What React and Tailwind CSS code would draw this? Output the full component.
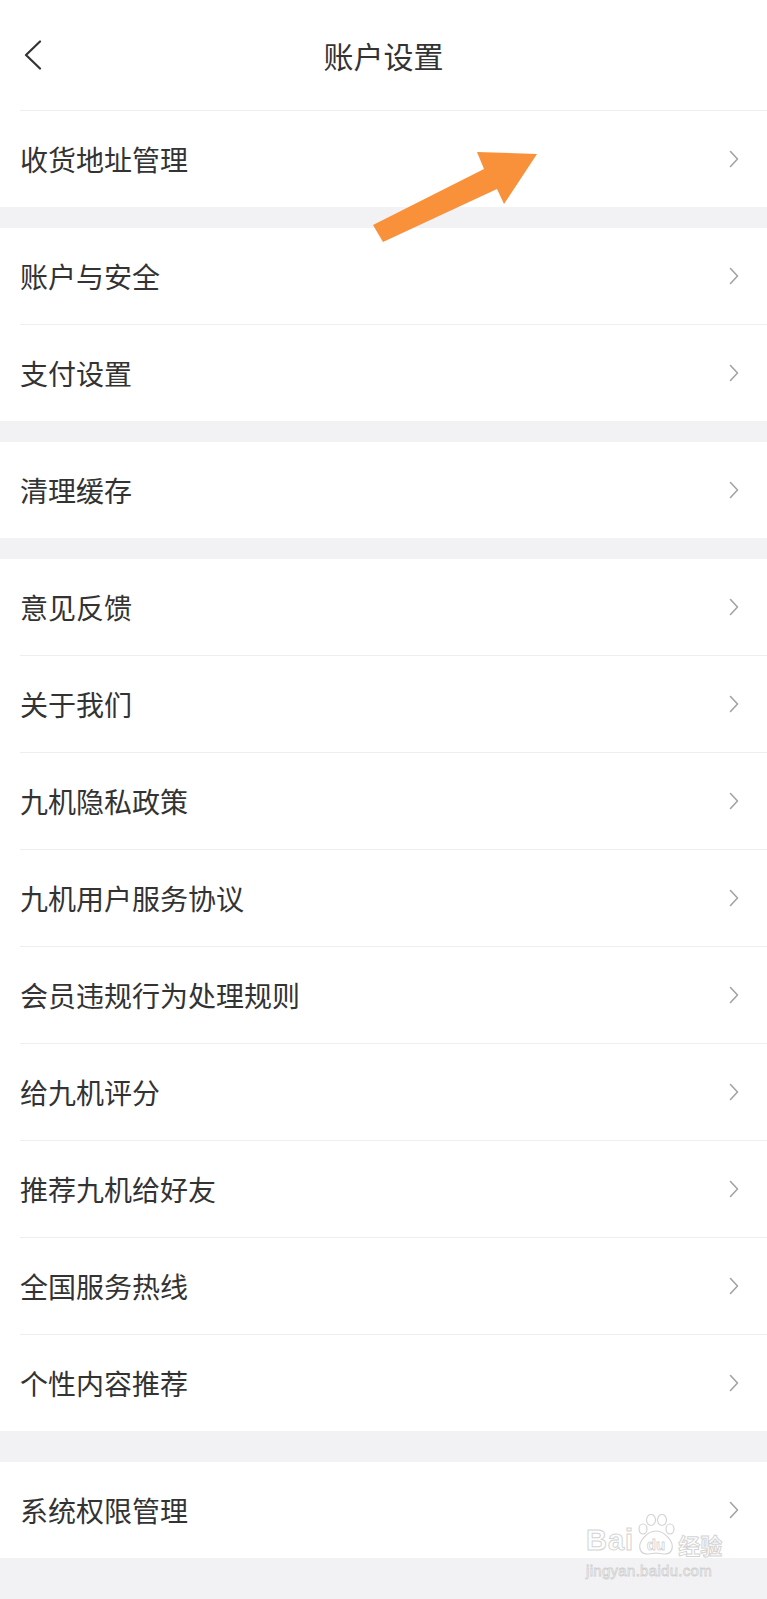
const SECTIONS = [
  { gap: 'mt-0', items: ['收货地址管理'] },
  { gap: 'mt-[21px]', items: ['账户与安全', '支付设置'] },
  { gap: 'mt-[21px]', items: ['清理缓存'] },
  {
    gap: 'mt-[21px]',
    items: [
      '意见反馈',
      '关于我们',
      '九机隐私政策',
      '九机用户服务协议',
      '会员违规行为处理规则',
      '给九机评分',
      '推荐九机给好友',
      '全国服务热线',
      '个性内容推荐',
    ],
  },
  { gap: 'mt-[31px]', items: ['系统权限管理'] },
];

const FONT = "font-['Noto_Sans_CJK_SC','Noto_Sans',sans-serif]";

function Chevron() {
  return (
    <svg width="10" height="18" viewBox="0 0 10 18" fill="none" className="shrink-0">
      <path d="M1.5 1.5 L8.5 9 L1.5 16.5" stroke="#a3a3a3" strokeWidth="1.6" strokeLinecap="round" strokeLinejoin="round" />
    </svg>
  );
}

function Row({ label, last }) {
  return (
    <div className="bg-white pl-5">
      <div
        className={`box-content flex h-[96px] items-center justify-between pr-[28px] ${last ? '' : 'border-b border-[#eeeeee]'}`}
      >
        <span className="text-[28px] leading-none text-[#333333]">{label}</span>
        <Chevron />
      </div>
    </div>
  );
}

function Watermark() {
  return (
    <div className="pointer-events-none absolute left-[586px] top-[1514px] flex flex-col items-start">
      <div className="flex items-end">
        <span className="font-['Liberation_Sans',sans-serif] text-[29px] font-bold leading-none tracking-[1px] text-white [-webkit-text-stroke:1px_#d4d4d4]">
          Bai
        </span>
        <svg width="44" height="42" viewBox="0 0 44 42" className="-mb-[1px]">
          <g fill="#ffffff" stroke="#d4d4d4" strokeWidth="1.2">
            <ellipse cx="9" cy="15" rx="4" ry="5" />
            <ellipse cx="17" cy="6" rx="4.5" ry="5.5" />
            <ellipse cx="28" cy="6" rx="4.5" ry="5.5" />
            <ellipse cx="36" cy="15" rx="4" ry="5" />
            <path d="M22 17 C13 17 4 28 6 35 C8 42 16 40 22 39 C28 40 36 42 38 35 C40 28 31 17 22 17 Z" />
          </g>
          <text
            x="22"
            y="36"
            textAnchor="middle"
            fontFamily="Liberation Sans, sans-serif"
            fontSize="15"
            fontWeight="bold"
            fill="#ffffff"
            stroke="#d4d4d4"
            strokeWidth="0.8"
          >
            du
          </text>
        </svg>
        <span className={`${FONT} text-[22px] font-bold leading-none text-white [-webkit-text-stroke:1px_#d4d4d4]`}>
          经验
        </span>
      </div>
      <span className="mt-[8px] font-['Liberation_Sans',sans-serif] text-[15px] leading-none tracking-[0.3px] text-white [-webkit-text-stroke:0.8px_#d0d0d0]">
        jingyan.baidu.com
      </span>
    </div>
  );
}

function Arrow() {
  return (
    <svg
      className="pointer-events-none absolute left-0 top-0"
      width="767"
      height="260"
      viewBox="0 0 767 260"
    >
      <polygon
        points="373,225 484,169 477,152 537,154 504,204 497,189 383,242"
        fill="#f8913a"
      />
    </svg>
  );
}

export default function App() {
  return (
    <div className={`relative min-h-[1599px] w-full bg-[#f2f2f4] ${FONT}`}>
      <div className="bg-white">
        <div className="grid h-[110px] grid-cols-[1fr_auto_1fr] items-center">
          <div className="pl-6">
            <svg width="18" height="30" viewBox="0 0 18 30" fill="none">
              <path d="M16 1.5 L2 15 L16 28.5" stroke="#333333" strokeWidth="2.2" strokeLinecap="round" strokeLinejoin="round" />
            </svg>
          </div>
          <h1 className="text-[30px] font-normal leading-none text-[#333333]">账户设置</h1>
          <div />
        </div>
        <div className="ml-5 h-px bg-[#eeeeee]" />
      </div>

      {SECTIONS.map((section, si) => (
        <div key={si} className={section.gap}>
          {section.items.map((label, i) => (
            <Row key={label} label={label} last={i === section.items.length - 1} />
          ))}
        </div>
      ))}

      <Arrow />
      <Watermark />
    </div>
  );
}
